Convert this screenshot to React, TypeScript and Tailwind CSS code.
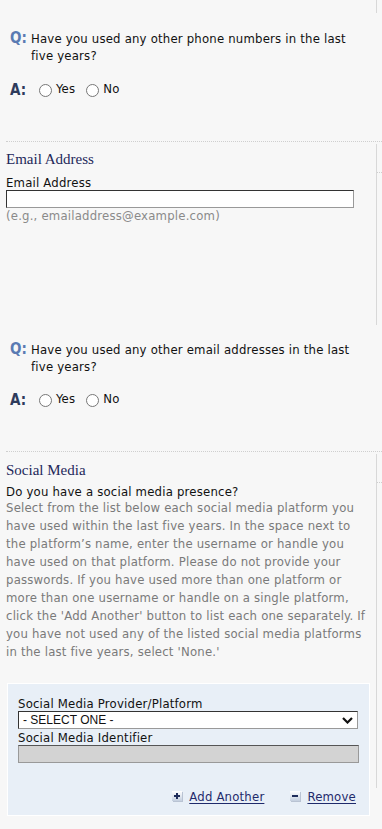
import React from "react";

const sans = "[font-family:'DejaVu_Sans_Condensed','DejaVu_Sans',sans-serif] tracking-[0.2px]";

function Radio({ label, name }: { label: string; name: string }) {
  return (
    <label className="flex items-start">
      <input type="radio" name={name} className="m-0 h-[13px] w-[13px] shrink-0" />
      <span className="ml-[4px] mt-[-2px] text-[13px] leading-[13px] text-[#111]">{label}</span>
    </label>
  );
}

function QBlock({ lines, name, pt, gap }: { lines: string[]; name: string; pt: string; gap: string }) {
  return (
    <div className={`pl-[10px] ${pt}`}>
      <div className="flex items-start">
        <span className="w-[21px] shrink-0 text-[15px] font-bold leading-[17px] tracking-normal text-[#5a7bb3]">Q:</span>
        <p className="text-[13px] leading-[17px] text-[#111]">
          {lines[0]}
          <br />
          {lines[1]}
        </p>
      </div>
      <div className={`flex items-start ${gap}`}>
        <span className="mt-[-1px] w-[29px] shrink-0 text-[15px] font-bold leading-[15px] tracking-normal text-[#2e3b5c]">A:</span>
        <div className="flex items-start gap-[11px]">
          <Radio label="Yes" name={name} />
          <Radio label="No" name={name} />
        </div>
      </div>
    </div>
  );
}

function Aside({ h }: { h: string }) {
  return (
    <div className={`mt-[2px] w-[6px] shrink-0 border-l border-[#d8d8d8] ${h}`}>
      <div className="h-[29px] border-b border-dotted border-[#cfcfcf]" />
    </div>
  );
}

function IconBox({ minus }: { minus?: boolean }) {
  return (
    <svg width="11" height="11" viewBox="0 0 11 11" className="shrink-0">
      <defs>
        <linearGradient id={minus ? "gm" : "gp"} x1="0" y1="0" x2="0" y2="1">
          <stop offset="0" stopColor="#ffffff" />
          <stop offset="1" stopColor="#c4cfdf" />
        </linearGradient>
      </defs>
      <rect x="0" y="0" width="10" height="10" fill={`url(#${minus ? "gm" : "gp"})`} />
      <rect x="1" y="10" width="10" height="1" fill="#b9c3d3" />
      <rect x="10" y="1" width="1" height="10" fill="#b9c3d3" />
      <rect x="2" y="4" width="6" height="2" fill="#1e2c5a" />
      {!minus && <rect x="4" y="2" width="2" height="6" fill="#1e2c5a" />}
    </svg>
  );
}

export default function App() {
  return (
    <div className={`min-h-[829px] w-[382px] overflow-hidden bg-[#f7f7f7] ${sans}`}>
      {/* Phone question */}
      <div className="flex h-[141px]">
        <div className="flex-1">
          <QBlock
            name="phone"
            pt="pt-[30px]"
            gap="mt-[20px]"
            lines={["Have you used any other phone numbers in the last", "five years?"]}
          />
        </div>
        <div className="h-[13px] w-[6px] shrink-0 border-l border-[#d8d8d8]" />
      </div>

      {/* Email section */}
      <div className="ml-[6px] flex h-[184px] border-t border-dotted border-[#cfcfcf]">
        <div className="flex-1 pt-[8px]">
          <h2 className="font-['Liberation_Serif',serif] text-[15px] leading-[18px] tracking-normal text-[#23285a]">Email Address</h2>
          <div className="mt-[7px] text-[13px] leading-[15px] text-[#111]">Email Address</div>
          <input
            type="text"
            className="block h-[18px] w-[348px] border border-[#999] border-l-[#333] border-t-[#333] bg-white outline-none"
          />
          <div className="text-[13px] leading-[15px] text-[#8a8a8a]">(e.g., emailaddress@example.com)</div>
        </div>
        <Aside h="h-[181px]" />
      </div>

      {/* Other email question */}
      <div className="h-[126px]">
        <QBlock
          name="email"
          pt="pt-[16px]"
          gap="mt-[19px]"
          lines={["Have you used any other email addresses in the last", "five years?"]}
        />
      </div>

      {/* Social media section */}
      <div className="ml-[6px] flex border-t border-dotted border-[#cfcfcf] pb-[15px]">
        <div className="flex-1 pt-[9px]">
          <h2 className="font-['Liberation_Serif',serif] text-[15px] leading-[18px] tracking-normal text-[#23285a]">Social Media</h2>
          <div className="mt-[5px] text-[13px] leading-[15px] text-[#111]">Do you have a social media presence?</div>
          <p className="whitespace-nowrap text-[13px] leading-[18px] text-[#7a7a7a]">
            Select from the list below each social media platform you
            <br />
            have used within the last five years. In the space next to
            <br />
            the platform’s name, enter the username or handle you
            <br />
            have used on that platform. Please do not provide your
            <br />
            passwords. If you have used more than one platform or
            <br />
            more than one username or handle on a single platform,
            <br />
            click the 'Add Another' button to list each one separately. If
            <br />
            you have not used any of the listed social media platforms
            <br />
            in the last five years, select 'None.'
          </p>

          <div className="ml-[1px] mt-[22px] h-[133px] w-[363px] border border-white bg-[#e8eff7] pl-[10px] pt-[12px]">
            <div className="text-[13px] leading-[15px] text-[#111]">Social Media Provider/Platform</div>
            <div className="relative w-[340px]">
              <select className="block h-[18px] w-[340px] appearance-none border border-[#999] border-l-[#333] border-t-[#333] bg-white pl-[4px] font-['Liberation_Sans',sans-serif] text-[12px] leading-[16px] tracking-normal text-[#111] outline-none">
                <option>- SELECT ONE -</option>
              </select>
              <svg
                width="11"
                height="7"
                viewBox="0 0 11 7"
                className="pointer-events-none absolute right-[5px] top-[6px]"
              >
                <path d="M1 1 L5.5 5.5 L10 1" fill="none" stroke="#111" strokeWidth="2.2" />
              </svg>
            </div>
            <div className="mt-[1px] text-[13px] leading-[15px] text-[#111]">Social Media Identifier</div>
            <input
              type="text"
              disabled
              className="block h-[18px] w-[341px] border border-[#999] border-t-[#555] bg-[#d3d3d3]"
            />
            <div className="mt-[26px] flex items-center justify-end pr-[13px]">
              <IconBox />
              <span className="ml-[6px] text-[13px] leading-[15px] text-[#1f2a6b] underline underline-offset-[2px]">
                Add Another
              </span>
              <span className="ml-[26px]"><IconBox minus /></span>
              <span className="ml-[6px] text-[13px] leading-[15px] text-[#1f2a6b] underline underline-offset-[2px]">
                Remove
              </span>
            </div>
          </div>
        </div>
        <Aside h="h-[334px]" />
      </div>
    </div>
  );
}
